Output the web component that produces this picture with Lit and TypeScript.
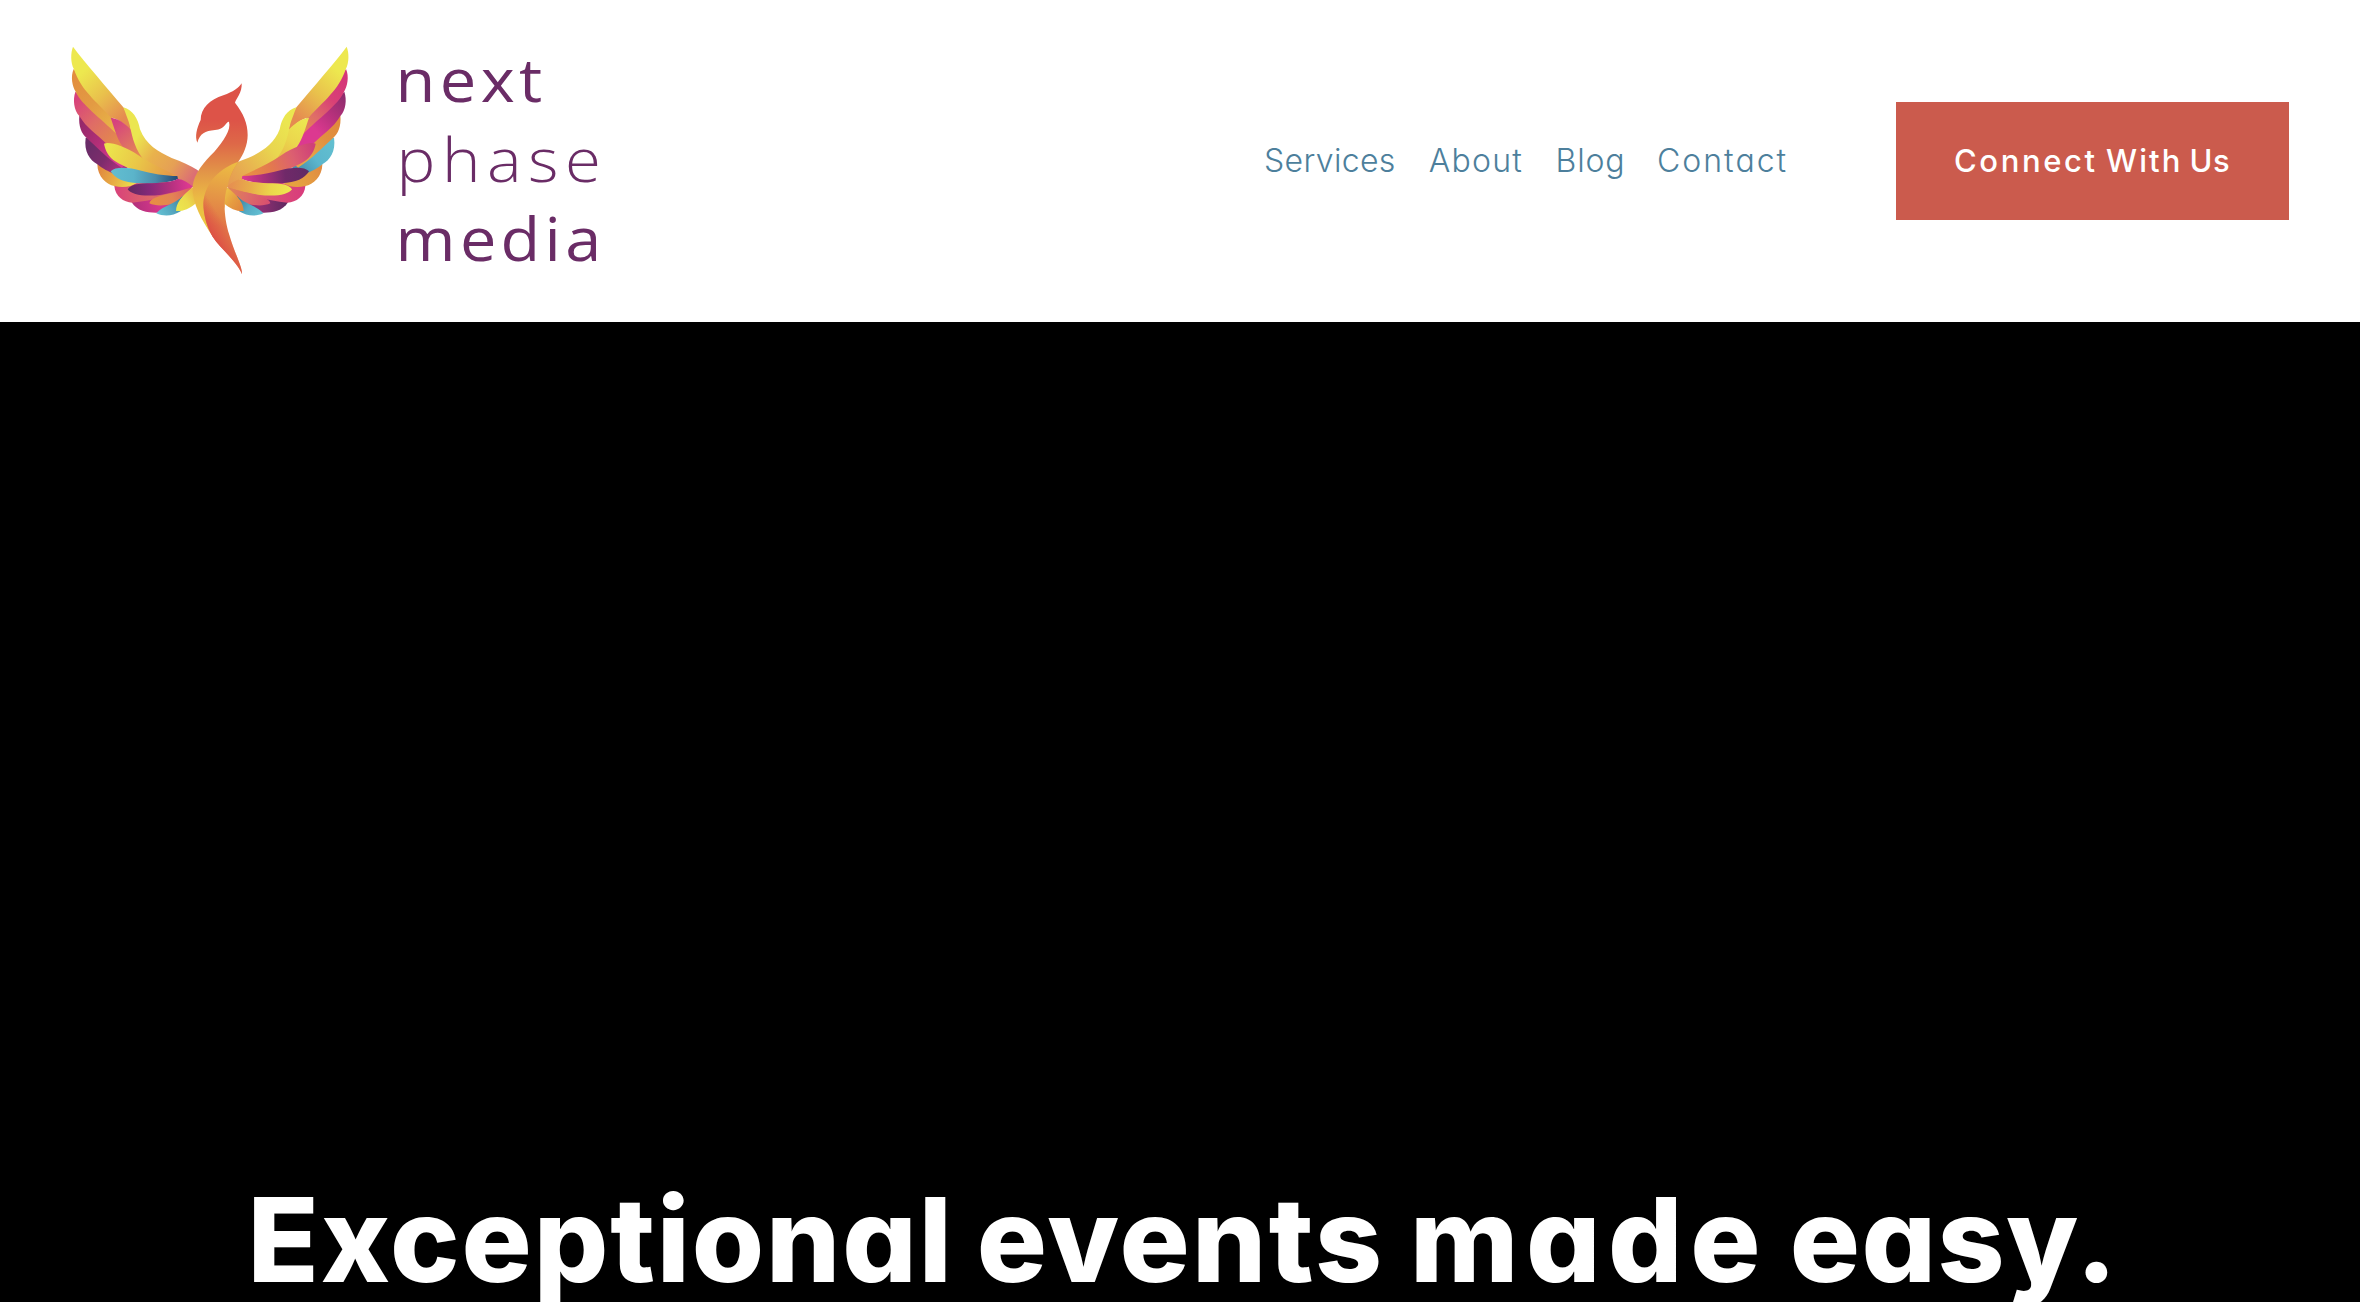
import { LitElement, html, svg, css } from "lit";
import { customElement } from "lit/decorators.js";

type Paint = [number, number, number, number, string[]];

const FEATHERS: string[] = [
  "M215 517 C233 547 270 549 296 548 L370 505 L395 474 L300 480 Z",
  "M163 468 C166 500 190 516 217 518 C270 512 340 500 397 472 L300 450 Z",
  "M112 402 C112 440 140 464 163 468 C190 475 215 470 230 458 L160 410 Z",
  "M77 323 C71 365 90 390 112 403 C130 418 146 424 158 430 L205 412 L120 330 Z",
  "M58 256 C55 290 65 312 80 324 C110 350 140 385 185 413 L210 390 L135 330 Z",
  "M46 185 C38 210 42 240 58 258 C80 295 110 312 138 340 L280 410 L160 290 Z",
  "M41 117 C31 140 37 170 47 185 C65 225 120 262 170 312 L220 345 L152 255 Z",
  "M39 50 C75 98 140 172 190 232 C205 255 210 275 214 305 C195 282 172 266 152 262 C110 215 62 180 42 118 C31 97 32 68 39 50 Z",
  "M152 263 C180 266 204 288 216 303 C228 340 245 375 274 405 C235 390 205 374 188 350 C170 325 162 290 152 263 Z",
  "M190 232 C218 240 234 265 240 298 C258 345 295 366 335 384 C365 395 392 408 411 419 L424 430 L415 474 L397 472 C370 450 340 440 305 436 L270 408 C232 375 220 335 213 303 C208 275 198 255 190 232 Z",
  "M132 341 C148 334 195 349 234 375 C280 406 325 424 352 438 C325 439 295 437 262 430 C220 422 190 408 168 395 C145 381 136 362 132 341 Z",
  "M152 424 C165 410 200 411 235 420 C275 431 318 438 352 438 L354 447 C335 457 280 462 235 460 C190 458 165 445 152 424 Z",
  "M203 478 C215 458 250 461 290 459 C322 457 345 452 353 446 C370 448 388 460 399 470 C370 480 345 486 305 494 C255 501 215 495 203 478 Z",
  "M268 520 C273 500 310 496 345 487 C365 482 385 475 397 471 C385 492 362 512 340 521 C312 528 285 528 268 520 Z",
  "M289 550 C310 526 345 522 368 498 L362 544 C338 559 310 560 289 550 Z",
  "M348 543 C349 518 363 500 396 473 L412 468 L413 515 L406 521 C390 536 365 545 348 543 Z",
];

const LEFT: Paint[] = [
  [215, 530, 370, 490, ["#b02f7a", "#d6388c", "#d6388c"]],
  [165, 480, 390, 480, ["#d8427a", "#de6a68", "#cf3a80"]],
  [115, 420, 225, 465, ["#e1883f", "#e8b045", "#ece24c"]],
  [85, 350, 185, 420, ["#6a2c68", "#7d2c6c", "#b23080"]],
  [62, 280, 190, 380, ["#94296a", "#b42f78", "#dd3a92"]],
  [45, 205, 175, 330, ["#d8407c", "#df6c66", "#e38a4c"]],
  [42, 135, 180, 290, ["#e28d3f", "#e39b43", "#e9b748"]],
  [80, 115, 205, 250, ["#ede84f", "#e9c04c", "#e58b50"]],
  [165, 275, 260, 390, ["#d6427e", "#de6d66", "#e79846"]],
  [225, 330, 400, 440, ["#ebe650", "#e9b24c", "#e5a055", "#dc6e74"]],
  [145, 350, 330, 430, ["#ece54c", "#e9c648", "#e69a48"]],
  [155, 435, 352, 445, ["#62bdd0", "#5bb4ca", "#4a8cab", "#264a77"]],
  [210, 480, 385, 465, ["#642a63", "#85297a", "#b0307e", "#dc3890"]],
  [275, 515, 395, 475, ["#e78e44", "#e38453", "#db5a68"]],
  [295, 550, 365, 505, ["#63bfd2", "#54a5be", "#3f84a0"]],
  [350, 530, 405, 490, ["#ece64e", "#ebdb4c", "#e9b945"]],
];

const RIGHT: Paint[] = [
  [225, 520, 350, 520, ["#632962", "#8b2e70", "#a53278"]],
  [170, 480, 390, 480, ["#d93c7c", "#da5574", "#e38a50"]],
  [115, 410, 205, 465, ["#e08b41", "#e49a41", "#e6a33f"]],
  [80, 340, 190, 430, ["#62bfd0", "#5bb6cd", "#4389a8"]],
  [60, 270, 175, 350, ["#e0893c", "#e1913f", "#e5a547"]],
  [48, 200, 185, 340, ["#8f2d6e", "#b7317c", "#dc3990", "#dc3990"]],
  [45, 150, 190, 300, ["#d53679", "#d94076", "#df6c68", "#e58e4c"]],
  [80, 110, 205, 250, ["#ede84f", "#e9c04c", "#e58b50"]],
  [165, 275, 250, 390, ["#ece650", "#ebd64d", "#e9b548"]],
  [210, 290, 400, 450, ["#ebe650", "#e9d64f", "#e8b650", "#e69a52"]],
  [140, 350, 330, 430, ["#cf4078", "#dc6070", "#e3784f", "#e88d45"]],
  [160, 430, 350, 445, ["#632a65", "#702969", "#a82f7a", "#dd388f"]],
  [210, 480, 385, 465, ["#ede84f", "#ebd54b", "#e8ae49", "#e69150"]],
  [275, 515, 395, 475, ["#d9506f", "#dd6c68", "#e18652"]],
  [295, 550, 365, 505, ["#63bfd2", "#55abc4", "#3b7f9d"]],
  [350, 530, 405, 490, ["#e0883f", "#e69c41", "#ecbc45"]],
];

const TAIL = "M175 275 C120 295 75 335 70 400 C70 432 80 470 98 500 C120 535 170 573 186 612 C187 590 162 545 148 495 C137 460 133 425 134 400 C136 350 150 310 175 275 Z";

@customElement("phoenix-logo")
export class PhoenixLogo extends LitElement {
  static styles = css`
    :host { display: block; width: 560px; height: 260px; }
    .art { display: block; width: 100%; height: 100%; }
    .word { font-family: "Open Sans", "Noto Sans", sans-serif; font-size: 60px; fill: #6a2c66; }
    .regular { font-weight: 400; letter-spacing: 4px; }
    .light { font-weight: 320; letter-spacing: 6px; }
    .medium { font-weight: 500; letter-spacing: 4px; }
  `;

  private wing(side: string, paints: Paint[]) {
    return paints.map(([x1, y1, x2, y2, stops], i) => svg`
      <linearGradient id=${side + i} gradientUnits="userSpaceOnUse" x1=${x1} y1=${y1} x2=${x2} y2=${y2}>
        ${stops.map((c, k) => svg`<stop offset=${k / (stops.length - 1)} stop-color=${c}></stop>`)}
      </linearGradient>
      <path d=${FEATHERS[i]} fill=${`url(#${side + i})`}></path>`);
  }

  render() {
    return html`<svg class="art" viewBox="60 30 560 260" role="img">
      <defs>
        <linearGradient id="body" gradientUnits="userSpaceOnUse" x1="120" y1="40" x2="120" y2="470">
          <stop offset="0.25" stop-color="#dd5348"></stop>
          <stop offset="0.42" stop-color="#de6848"></stop>
          <stop offset="0.62" stop-color="#e29548"></stop>
          <stop offset="0.8" stop-color="#ebba44"></stop>
          <stop offset="1" stop-color="#ebc842"></stop>
        </linearGradient>
        <linearGradient id="tail" gradientUnits="userSpaceOnUse" x1="160" y1="285" x2="125" y2="470">
          <stop offset="0" stop-color="#ecbb43"></stop>
          <stop offset="0.5" stop-color="#e59846"></stop>
          <stop offset="1" stop-color="#e17447"></stop>
        </linearGradient>
        <linearGradient id="ember" gradientUnits="userSpaceOnUse" x1="85" y1="480" x2="128" y2="453">
          <stop offset="0" stop-color="#dd5045"></stop>
          <stop offset="1" stop-color="#dd5045" stop-opacity="0"></stop>
        </linearGradient>
      </defs>
      <g transform="translate(60 30) scale(.33333)">${this.wing("l", LEFT)}</g>
      <g transform="translate(359.7 30) scale(-.33333 .33333)">${this.wing("r", RIGHT)}</g>
      <g transform="translate(180 70) scale(.33333)">
        <path fill="url(#body)" d="M185 40 C187 68 168 86 165 98 C190 130 203 160 203 195 C203 225 190 255 175 275 C150 310 135 360 134 410 L100 502 C65 450 36 400 38 350 C41 310 73 275 103 245 C130 213 154 180 147 155 C137 155 135 178 105 180 C75 183 60 190 52 218 C44 200 50 175 62 150 C62 115 90 88 130 76 C160 65 175 55 185 40 Z"></path>
        <path fill="url(#tail)" d=${TAIL}></path>
        <path fill="url(#ember)" d=${TAIL}></path>
      </g>
      <text class="word regular" x="395.6" y="102.3" textLength="150.9" lengthAdjust="spacingAndGlyphs">next</text>
      <text class="word light" x="396.6" y="182.3" textLength="210.8" lengthAdjust="spacingAndGlyphs">phase</text>
      <text class="word medium" x="395.6" y="261.3" textLength="210" lengthAdjust="spacingAndGlyphs">media</text>
    </svg>`;
  }
}

@customElement("app-root")
export class AppRoot extends LitElement {
  static styles = css`
    :host { display: flex; flex-direction: column; height: 1302px; overflow: hidden; background: #000; font-family: Inter, "Open Sans", sans-serif; font-feature-settings: "cv11"; }
    .bar { display: flex; align-items: center; flex: none; height: 322px; box-sizing: border-box; padding: 0 71px 2px 60px; background: #fff; }
    .nav { display: flex; margin: 2px 0 0 auto; color: #4d7f9c; font-size: 32px; font-weight: 300; line-height: 40px; }
    .services { width: 164.8px; letter-spacing: 0.34px; }
    .about { width: 126.8px; letter-spacing: 1.2px; }
    .blog { width: 101.4px; letter-spacing: 0.8px; }
    .contact { width: 239px; letter-spacing: 2px; }
    .cta { display: flex; align-items: center; width: 393px; height: 118px; margin-top: 2px; box-sizing: border-box; padding-left: 58px; background: #cb5b4d; color: #fff; font-size: 31px; font-weight: 450; line-height: 40px; }
    .connect { width: 152px; letter-spacing: 2.6px; }
    .with { width: 83.5px; letter-spacing: 2.1px; }
    .us { letter-spacing: 0.5px; }
    .hero { flex: 1; display: flex; align-items: flex-end; padding-left: 247.5px; }
    .title { display: flex; margin: 0 0 -3px; color: #fff; font-size: 117px; font-weight: 800; line-height: 130px; white-space: nowrap; }
    .exceptional { width: 729.2px; letter-spacing: 1.9px; }
    .events { width: 433.3px; letter-spacing: 2.3px; }
    .made { width: 379.7px; letter-spacing: 7.5px; }
    .easy { letter-spacing: 1.5px; }
  `;

  render() {
    return html`
      <header class="bar">
        <phoenix-logo></phoenix-logo>
        <nav class="nav">
          <span class="services">Services</span><span class="about">About</span><span class="blog">Blog</span><span class="contact">Contact</span>
        </nav>
        <div class="cta"><span class="connect">Connect</span><span class="with">With</span><span class="us">Us</span></div>
      </header>
      <main class="hero">
        <h1 class="title"><span class="exceptional">Exceptional</span><span class="events">events</span><span class="made">made</span><span class="easy">easy.</span></h1>
      </main>`;
  }
}
